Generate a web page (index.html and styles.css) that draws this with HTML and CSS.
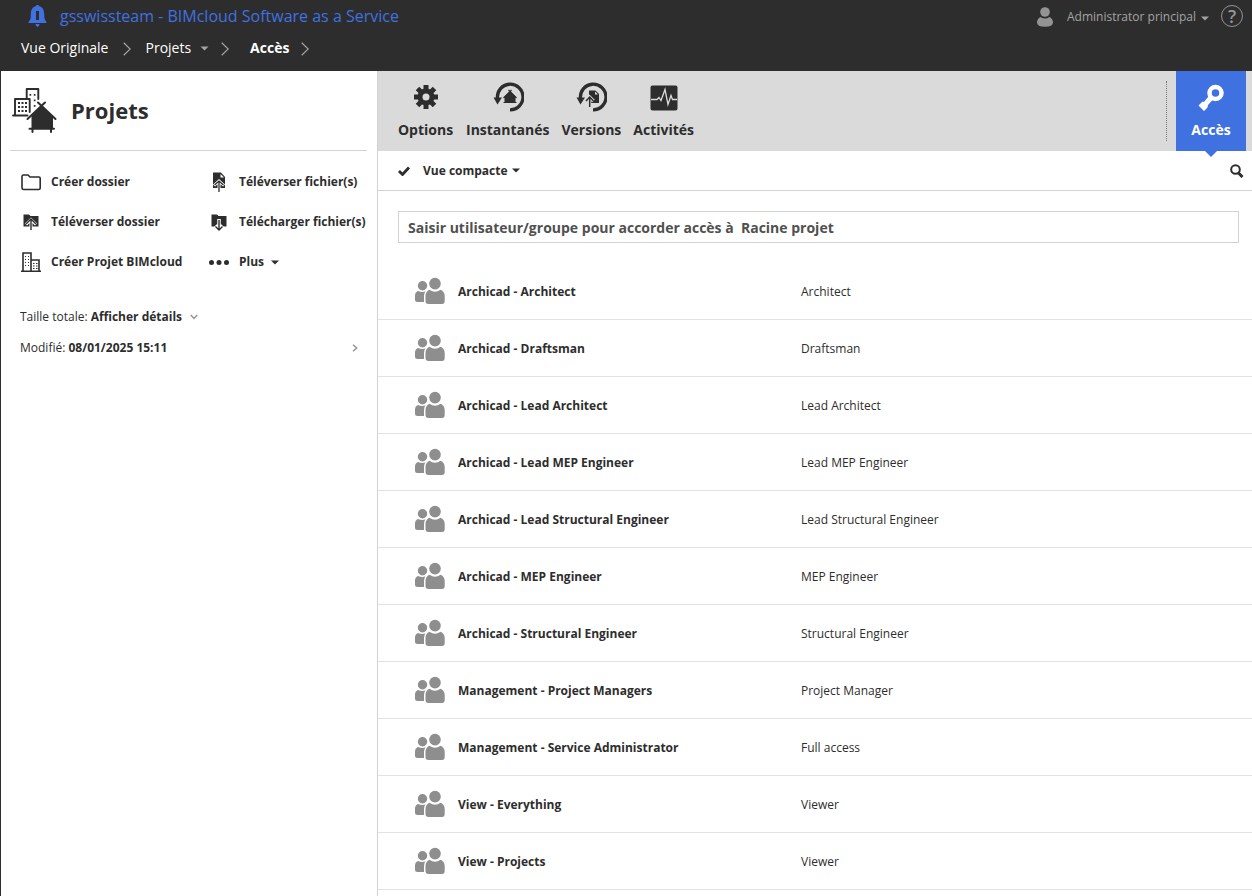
FILE: index.html
```html
<!DOCTYPE html>
<html lang="fr">
<head>
<meta charset="utf-8">
<title>BIMcloud - Accès</title>
<link rel="stylesheet" href="styles.css">
</head>
<body>
<svg class="sprite" aria-hidden="true">
  <symbol id="group" viewBox="0 0 30 27">
    <circle cx="7.5" cy="8.7" r="4.7"/><circle cx="20" cy="6.6" r="5.8"/>
    <path d="M3 14Q7.500 16 10.500 14.300Q9 16 9 19V25H2.500Q0 25 0 22.500V18.500Q0 15 3 14ZM14.500 12.800Q20 16.500 25.500 12.800Q29.700 14.500 29.700 19V24Q29.700 27 27 27H13.500Q10.500 27 10.500 24V19Q10.500 14.500 14.500 12.800Z"/>
  </symbol>
  <symbol id="chevron" viewBox="0 0 8 14"><path d="M.7.7 7.200 7 .7 13.300" fill="none" stroke="currentColor" stroke-width="1.200"/></symbol>
  <symbol id="caret" viewBox="0 0 8 5"><path d="M0 .5h8L4 4.500z"/></symbol>
  <symbol id="history" viewBox="0 0 32 32"><path d="M5.500 17.500A12.800 12.800 0 1 1 18 28.800" fill="none" stroke="#2d2d2d" stroke-width="3.300"/><path d="M1.500 16.500H10L5.500 23.500z"/></symbol>
</svg>
<header class="topbar">
  <div class="topbar-row">
    <svg class="bell" viewBox="0 0 18 22"><path d="M9 0q1.500 0 1.800 1.300C14.500 2.200 15.700 5.500 15.700 10c0 4 .8 5.500 2.300 7v1H0v-1c1.500-1.500 2.300-3 2.300-7 0-4.500 1.200-7.800 4.900-8.700Q7.500 0 9 0z"/><path d="M7.200 19h3.600v1.400L9 22l-1.800-1.600z"/><path class="bell-mark" d="M7.500 6h3v9h-3z"/></svg>
    <a class="server" href="#">gsswissteam - BIMcloud Software as a Service</a>
    <button class="user"><svg class="user-icon" viewBox="0 0 16 20"><circle cx="8" cy="5" r="4.800"/><path d="M3.500 10Q8 13 12.500 10 16 12 16 15.500 16 19.700 8 19.700T0 15.500Q0 12 3.500 10z"/></svg>Administrator principal<svg class="caret caret-small"><use href="#caret"/></svg></button>
    <button class="help" aria-label="Aide">?</button>
  </div>
  <nav class="crumbs" aria-label="Fil d'Ariane">
    <a href="#">Vue Originale</a><svg class="sep"><use href="#chevron"/></svg>
    <a class="crumb-menu" href="#">Projets<svg class="caret"><use href="#caret"/></svg></a><svg class="sep"><use href="#chevron"/></svg>
    <a class="current" href="#">Accès</a><svg class="sep"><use href="#chevron"/></svg>
  </nav>
</header>
<div class="workspace">
  <aside class="sidebar">
    <div class="heading">
      <svg class="project-icon" viewBox="-1 -1 46 46"><g fill="none" stroke="#2d2d2d" stroke-width="1.900" stroke-linejoin="round" stroke-linecap="round"><path d="M14.700 10V1H26.300V11M3 27V11H17.700V24M1 27.500H15.500"/></g><path d="M17.500 6h1.700v1.700h-1.700zM21.800 6h1.700v1.700h-1.700zM21.800 11.500h1.700v1.700h-1.700zM21.800 17h1.700v1.700h-1.700zM6 14h2v2H6zm3.500 0h2v2h-2zM13 14h2v2h-2zM6 18h2v2H6zm3.500 0h2v2h-2zM13 18h2v2h-2zM6 22h2v2H6zm3.500 0h2v2h-2zM13 22h2v2h-2z"/><path d="M29.500 17.500 41 29V40.500H19.500V28z"/><path d="M33 14.500 15.500 31M26 14.500 43.500 31M17.500 40.700H42M20.500 41v3M39 41v3" fill="none" stroke="#2d2d2d" stroke-width="2" stroke-linecap="round"/></svg>
      <h1>Projets</h1>
    </div>
    <div class="actions">
      <button><svg viewBox="0 0 20 20"><path d="M1 4.500Q1 3 2.500 3H7l2 2h9q1.200 0 1.200 1.200V16q0 1.500-1.500 1.500h-15Q1 17.500 1 16z" fill="none" stroke="#2d2d2d" stroke-width="1.600"/></svg>Créer dossier</button>
      <button><svg viewBox="0 0 20 20"><path d="M4 .5h8L16 5v11H4z"/><path d="M11.500 2v3.500H15z" fill="#fff"/><path d="m5 13.500 5-4.500 5 4.500M10 10v9" fill="none" stroke="#fff" stroke-width="3"/><path d="m5.500 13 4.500-4 4.500 4M10 9v11" fill="none" stroke="#2d2d2d" stroke-width="1.300"/></svg>Téléverser fichier(s)</button>
      <button><svg viewBox="0 0 20 20"><path d="M2.500 2.500H8L9.500 4H17.500V14.500H2.500z"/><path d="m5 12.500 5-5 5 5M10 8v10" fill="none" stroke="#fff" stroke-width="3"/><path d="m5 12 5-5 5 5M10 7v11" fill="none" stroke="#2d2d2d" stroke-width="1.400"/></svg>Téléverser dossier</button>
      <button><svg viewBox="0 0 20 20"><path d="M2.500 2.500H8L9.500 4H17.500V14.500H2.500z"/><path d="M10 7v9M6.500 13.500 10 17l3.500-3.500" fill="none" stroke="#fff" stroke-width="3.500"/><path d="M10 8v10m-3.500-3.500L10 18l3.500-3.500" fill="none" stroke="#2d2d2d" stroke-width="1.400"/></svg>Télécharger fichier(s)</button>
      <button><svg viewBox="0 0 20 20"><path d="M2 19V1h8v18M10 8h8v11M0 19.200h20" fill="none" stroke="#2d2d2d" stroke-width="1.600"/><path d="M4 4h1v1H4zm3 0h1v1H7zM4 7h1v1H4zm3 0h1v1H7zm-3 3h1v1H4zm3 0h1v1H7zm-3 3h1v1H4zm3 0h1v1H7zM12 11h1.500v1H12zm3 0h1.500v1H15zm-3 2.500h1.500v1H12zm3 0h1.500v1H15zM12 16h1.500v1H12zm3 0h1.500v1H15z"/></svg>Créer Projet BIMcloud</button>
      <button><svg viewBox="0 0 20 20"><circle cx="2.500" cy="10.500" r="2.500"/><circle cx="10" cy="10.500" r="2.500"/><circle cx="17.500" cy="10.500" r="2.500"/></svg>Plus<svg class="caret caret-small"><use href="#caret"/></svg></button>
    </div>
    <div class="details">
      <button>Taille totale: <b>Afficher détails</b><svg class="down" viewBox="0 0 8 6"><path d="m.8 1 3.200 3.500L7.200 1"/></svg></button>
      <button>Modifié: <b>08/01/2025 15:11</b><svg class="right" viewBox="0 0 6 8"><path d="m1 .8 3.700 3.200L1 7.200"/></svg></button>
    </div>
  </aside>
  <main class="content">
    <nav class="tabs" aria-label="Sections">
      <button><svg viewBox="0 0 32 32"><g stroke="#2d2d2d" stroke-width="5"><path d="M16 4v24M4 16h24M7.500 7.500l17 17m0-17-17 17"/></g><circle cx="16" cy="16" r="8.500"/><circle cx="16" cy="16" r="3.500" fill="#dadada"/></svg>Options</button>
      <button><svg viewBox="0 0 32 32"><use href="#history"/><path d="m18 10 5.500 5.500V22h-11v-6.500z"/><path d="M19.500 9 11.500 17M16.500 9 24.500 17M11.500 21.500H24.500" fill="none" stroke="#2d2d2d" stroke-width="1.200"/></svg>Instantanés</button>
      <button><svg viewBox="0 0 32 32"><use href="#history"/><path d="M14 9.500h6.500L24 13v9H14z"/><path d="M20 10.500V13.500H23z" fill="#dadada"/><path d="m11 20 3.500-4 4 4M14.500 17v7" fill="none" stroke="#dadada" stroke-width="3.500"/><path d="m11 20 3.700-4 3.800 4M14.700 17v9" fill="none" stroke="#2d2d2d" stroke-width="1.500"/></svg>Versions</button>
      <button><svg viewBox="0 0 32 32"><rect x="2.500" y="4.500" width="27" height="25" rx="2"/><path d="M3 18.500h6l2-2 2 3 4-11 3 15 3-9 1.500 4H29" fill="none" stroke="#dadada" stroke-width="1.300"/></svg>Activités</button>
      <button class="active"><svg viewBox="0 0 32 32"><circle cx="20.500" cy="12" r="6" fill="none" stroke="#fff" stroke-width="4.500"/><path d="m15 13.500 4 4-6 6.500-.5 2.500-3.500 3.500-5.500-5.500 4-4 1.500.5z"/></svg>Accès</button>
    </nav>
    <div class="viewbar">
      <button><svg class="check" viewBox="0 0 12 10"><path d="m1 5 3.500 3.500L11 1.500" fill="none" stroke="#2d2d2d" stroke-width="2.800"/></svg>Vue compacte<svg class="caret caret-small"><use href="#caret"/></svg></button>
      <button class="search" aria-label="Rechercher"><svg viewBox="0 0 14 14"><circle cx="5.500" cy="5.500" r="4.300" fill="none" stroke="#2d2d2d" stroke-width="2"/><path d="m8.500 9 4 4" stroke="#2d2d2d" stroke-width="3"/></svg></button>
    </div>
    <div class="entry"><input type="text" aria-label="Utilisateur ou groupe" placeholder="Saisir utilisateur/groupe pour accorder accès à&nbsp; Racine projet"></div>
    <table class="access">
      <tbody>
      <tr><td><svg><use href="#group"/></svg></td><th scope="row">Archicad - Architect</th><td>Architect</td></tr>
      <tr><td><svg><use href="#group"/></svg></td><th scope="row">Archicad - Draftsman</th><td>Draftsman</td></tr>
      <tr><td><svg><use href="#group"/></svg></td><th scope="row">Archicad - Lead Architect</th><td>Lead Architect</td></tr>
      <tr><td><svg><use href="#group"/></svg></td><th scope="row">Archicad - Lead MEP Engineer</th><td>Lead MEP Engineer</td></tr>
      <tr><td><svg><use href="#group"/></svg></td><th scope="row">Archicad - Lead Structural Engineer</th><td>Lead Structural Engineer</td></tr>
      <tr><td><svg><use href="#group"/></svg></td><th scope="row">Archicad - MEP Engineer</th><td>MEP Engineer</td></tr>
      <tr><td><svg><use href="#group"/></svg></td><th scope="row">Archicad - Structural Engineer</th><td>Structural Engineer</td></tr>
      <tr><td><svg><use href="#group"/></svg></td><th scope="row">Management - Project Managers</th><td>Project Manager</td></tr>
      <tr><td><svg><use href="#group"/></svg></td><th scope="row">Management - Service Administrator</th><td>Full access</td></tr>
      <tr><td><svg><use href="#group"/></svg></td><th scope="row">View - Everything</th><td>Viewer</td></tr>
      <tr><td><svg><use href="#group"/></svg></td><th scope="row">View - Projects</th><td>Viewer</td></tr>
      </tbody>
    </table>
  </main>
</div>
</body>
</html>
```
FILE: styles.css
```css
* { box-sizing: border-box; }
html, body { height: 100%; }
body {
  margin: 0;
  display: flex;
  flex-direction: column;
  overflow: hidden;
  font: 12px/20px "Open Sans", "Noto Sans", sans-serif;
  color: #2d2d2d;
  background: #fff;
}
button { font: inherit; color: inherit; background: none; border: 0; padding: 0; cursor: pointer; }
a { color: inherit; text-decoration: none; }
svg { fill: #2d2d2d; flex: none; }
.sprite { position: absolute; width: 0; height: 0; }
.sprite symbol { fill: inherit; }
.caret { width: 9px; height: 5px; fill: currentColor; }
.caret-small { width: 8px; height: 5px; }

.topbar { flex: none; background: #2d2d2d; color: #fff; padding: 4px 9px 11px 21px; }
.topbar-row { display: flex; align-items: center; height: 24px; }
.bell { width: 19px; height: 22px; margin: 0 13px 0 7px; fill: #4071e0; }
.bell .bell-mark { fill: #2d2d2d; }
.server { font-size: 16px; color: #4071e0; }
.user { display: flex; align-items: center; margin-left: auto; padding-top: 2px; color: #a4a4a4; }
.user-icon { width: 16px; height: 20px; margin-right: 14px; fill: #949494; }
.user .caret { margin: 2px 0 0 5px; }
.help { width: 22px; height: 22px; margin-left: 12px; border: 1px solid #949494; border-radius: 50%; color: #949494; font-size: 18px; font-weight: 600; line-height: 20px; }
.crumbs { display: flex; align-items: center; height: 32px; padding-top: 8px; font-size: 14px; line-height: 24px; }
.crumbs .sep { width: 8px; height: 14px; margin: 2px 14px 0 15px; color: #a4a4a4; }
.crumb-menu { display: flex; align-items: center; gap: 9px; }
.crumb-menu .caret { color: #a4a4a4; margin-top: 1px; }
.crumbs .crumb-menu + .sep { margin-left: 12px; margin-right: 21px; }
.crumbs .current { font-weight: 700; }
.crumbs .current + .sep { margin-left: 12px; }

.workspace { flex: 1; min-height: 0; display: flex; border-left: 1px solid #2d2d2d; }
.sidebar { width: 377px; flex: none; border-right: 1px solid #d2d2d2; padding: 0 10px 0 9px; }
.heading { display: flex; align-items: center; gap: 14px; height: 80px; padding: 0 0 2px 1px; border-bottom: 1px solid #d2d2d2; }
.project-icon { width: 46px; height: 46px; }
h1 { margin: 0; font-size: 22px; line-height: 32px; font-weight: 700; }
.actions { display: grid; grid-template-columns: 188px 1fr; grid-auto-rows: 40px; padding: 11px 0 0 11px; }
.actions button { display: flex; align-items: center; gap: 10px; font-weight: 700; white-space: nowrap; }
.actions svg:first-child { width: 20px; height: 20px; }
.actions .caret { margin: 1px 0 0 -3px; }
.details { padding: 19px 9px 0 10px; }
.details button { display: flex; align-items: center; width: 100%; height: 31px; white-space: pre; }
.details path { fill: none; stroke: #949494; stroke-width: 1.5; }
.down { width: 8px; height: 6px; margin-left: 8px; }
.right { width: 6px; height: 8px; margin-left: auto; }

.content { flex: 1; min-width: 0; }
.tabs { display: flex; height: 80px; padding: 0 6px 0 13px; background: #dadada; }
.tabs button { display: flex; flex-direction: column; align-items: center; min-width: 69px; padding: 10px 6px 0; gap: 6px; font-size: 14px; font-weight: 700; line-height: 22px; }
.tabs svg { width: 32px; height: 32px; }
.tabs .active { position: relative; width: 70px; margin-left: auto; background: #4071e0; color: #fff; }
.tabs .active svg { fill: #fff; }
.tabs .active::before { content: ""; position: absolute; left: -10px; top: 10px; height: 60px; border-left: 1px dotted #777; }
.tabs .active::after { content: ""; position: absolute; left: 29px; top: 80px; border: 6px solid transparent; border-top-color: #4071e0; border-bottom: 0; }
.viewbar { display: flex; align-items: center; justify-content: space-between; height: 40px; padding: 0 8px 0 20px; border-bottom: 1px solid #d2d2d2; }
.viewbar button { display: flex; align-items: center; font-weight: 700; }
.check { width: 12px; height: 10px; margin-right: 13px; }
.viewbar .caret { margin-left: 4px; }
.search svg { width: 14px; height: 14px; }
.entry { padding: 20px 13px 20px 20px; }
.entry input { display: block; width: 100%; height: 32px; padding: 0 9px; border: 1px solid #d2d2d2; font: 700 14px/20px "Open Sans", "Noto Sans", sans-serif; }
.entry input::placeholder { color: #505050; opacity: 1; }
.access { width: 100%; border-spacing: 0; table-layout: fixed; }
.access td, .access th { height: 57px; padding: 2px 0 0; border-bottom: 1px solid #e2e2e2; text-align: left; }
.access th { width: 343px; font-weight: 700; }
.access td:first-child { width: 80px; padding: 0 0 2px 37px; }
.access svg { display: block; width: 30px; height: 27px; fill: #8e8e8e; }
```
